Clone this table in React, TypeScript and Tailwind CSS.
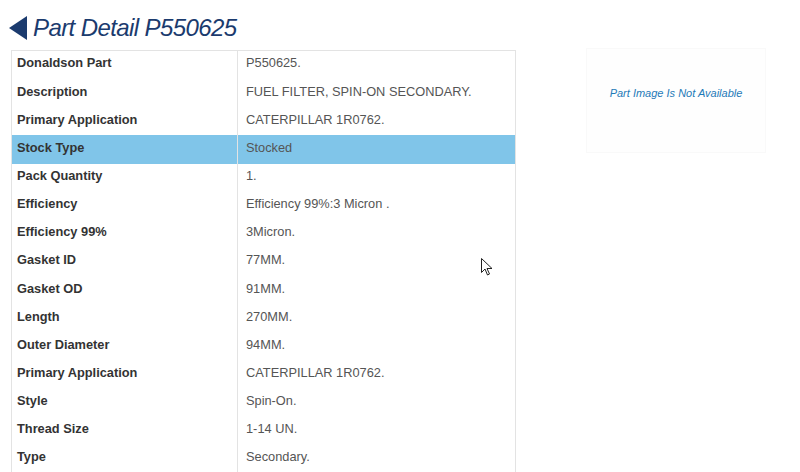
import React from "react";

const rows: [string, string][] = [
  ["Donaldson Part", "P550625."],
  ["Description", "FUEL FILTER, SPIN-ON SECONDARY."],
  ["Primary Application", "CATERPILLAR 1R0762."],
  ["Stock Type", "Stocked"],
  ["Pack Quantity", "1."],
  ["Efficiency", "Efficiency 99%:3 Micron ."],
  ["Efficiency 99%", "3Micron."],
  ["Gasket ID", "77MM."],
  ["Gasket OD", "91MM."],
  ["Length", "270MM."],
  ["Outer Diameter", "94MM."],
  ["Primary Application", "CATERPILLAR 1R0762."],
  ["Style", "Spin-On."],
  ["Thread Size", "1-14 UN."],
  ["Type", "Secondary."],
];

export default function App() {
  return (
    <div
      className="w-[800px] h-[472px] overflow-hidden bg-white relative"
      style={{ fontFamily: '"Liberation Sans", Arial, sans-serif' }}
    >
      <div className="flex items-center h-[50px] pl-[9px] pt-[5px]">
        <svg width="18" height="24" viewBox="0 0 18 24" className="mr-[6px]">
          <polygon points="18,0 18,24 0,12" fill="#1b3b6e" />
        </svg>
        <span className="italic text-[24px] text-[#1b3b6e] tracking-[-0.6px]">Part Detail P550625</span>
      </div>
      <div className="flex">
        <div className="ml-[11px] w-[505px] border border-[#e3e3e3] border-b-0">
          {rows.map(([k, v], i) => (
            <div
              key={i}
              className={`flex h-[28.15px] items-center text-[12.8px] ${k === "Stock Type" ? "bg-[#80c5e9]" : ""}`}
            >
              <div className="w-[226px] h-full flex items-center pl-[5px] pb-[4px] font-bold text-[#333333] border-r border-[#e3e3e3]">
                {k}
              </div>
              <div className="flex-1 h-full flex items-center pl-[8px] pb-[4px] text-[#555555]">{v}</div>
            </div>
          ))}
        </div>
        <div className="ml-[70px] mt-[-2px] w-[180px] h-[105px] border border-[#f9f9f9] bg-[#fefefe] flex items-center justify-center pb-[14px]">
          <span className="italic text-[11px] text-[#1e7ab8]">Part Image Is Not Available</span>
        </div>
      </div>
      <svg
        className="absolute left-[481px] top-[258px]"
        width="13"
        height="19"
        viewBox="0 0 13 19"
      >
        <path
          d="M0.5 0.5 L0.5 14.5 L4 11 L6.5 17 L8.5 16 L6 10.5 L11 10.5 Z"
          fill="white"
          stroke="#222"
          strokeWidth="1"
          strokeLinejoin="miter"
        />
      </svg>
    </div>
  );
}
